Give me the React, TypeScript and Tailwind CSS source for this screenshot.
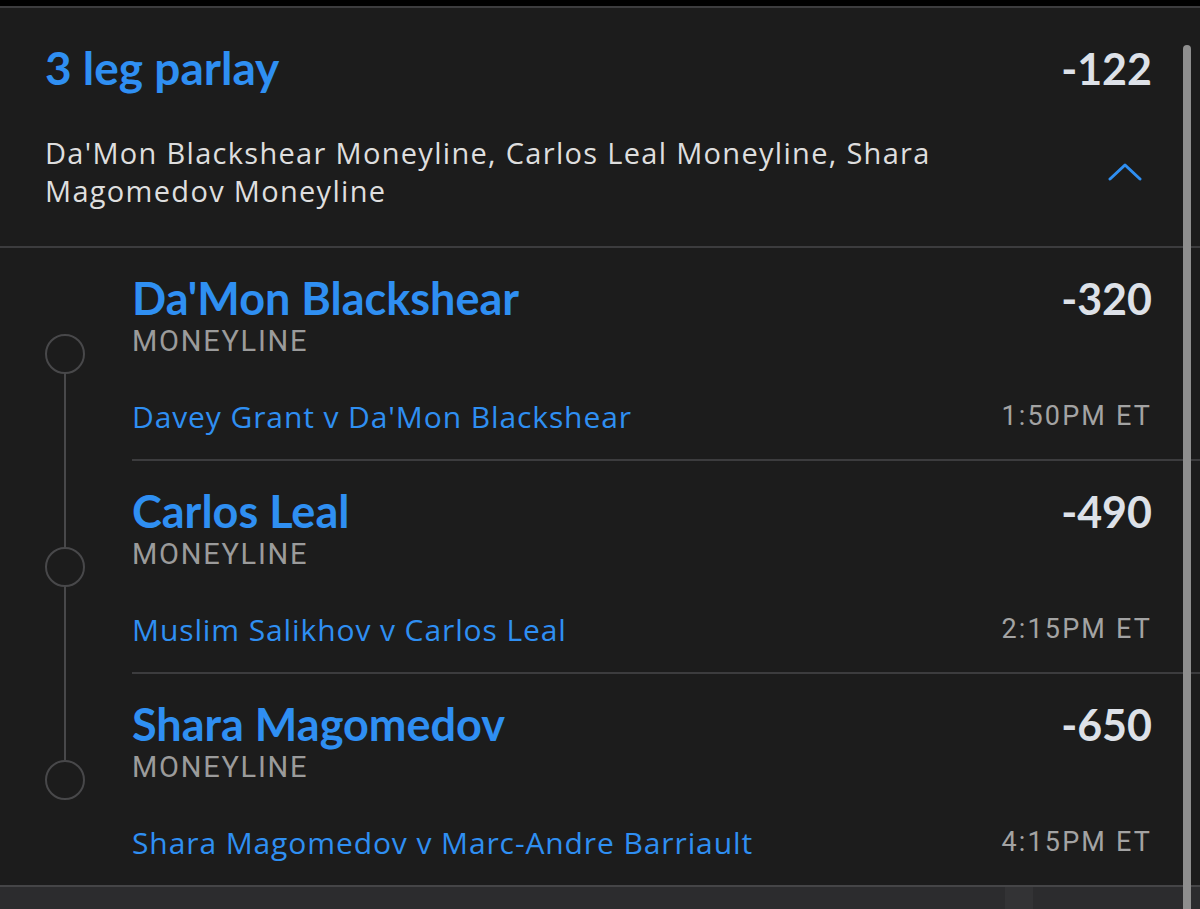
import React from 'react';

type Leg = {
  name: string;
  odds: string;
  matchup: string;
  time: string;
};

const legs: Leg[] = [
  { name: "Da'Mon Blackshear", odds: '-320', matchup: "Davey Grant v Da'Mon Blackshear", time: '1:50PM ET' },
  { name: 'Carlos Leal', odds: '-490', matchup: 'Muslim Salikhov v Carlos Leal', time: '2:15PM ET' },
  { name: 'Shara Magomedov', odds: '-650', matchup: 'Shara Magomedov v Marc-Andre Barriault', time: '4:15PM ET' },
];

const bold = "font-['Lato','Noto_Sans',sans-serif] font-bold";
const body = "font-['Open_Sans','Noto_Sans',sans-serif]";
const narrow = "font-['Roboto','Liberation_Sans',sans-serif]";

const LegRow: React.FC<{ leg: Leg; index: number; total: number }> = ({ leg, index, total }) => {
  const isFirst = index === 0;
  const isLast = index === total - 1;

  return (
    <div className="flex">
      {/* timeline */}
      <div className="w-[132px] shrink-0 flex">
        <div className="ml-[45px] w-[40px] flex flex-col items-center">
          <div className={`h-[86px] w-[2px] ${isFirst ? '' : 'bg-[#48484a]'}`} />
          <div className="h-[40px] w-[40px] rounded-full border-2 border-[#48484a] shrink-0" />
          <div className={`flex-1 w-[2px] ${isLast ? '' : 'bg-[#48484a]'}`} />
        </div>
      </div>

      <div className={`flex-1 pr-[48px] pt-[28px] pb-[25px] ${isLast ? '' : 'border-b-2 border-[#3c3c3e]'}`}>
        <div className="flex items-center justify-between h-[44px]">
          <span className={`${bold} text-[45px] text-[#2f8ff2] leading-none`}>{leg.name}</span>
          <span className={`${bold} text-[43px] text-[#dde1e8] leading-none`}>{leg.odds}</span>
        </div>
        <div className={`${narrow} mt-[6px] h-[32px] flex items-center text-[29px] tracking-[0.06em] text-[#9b9b9b]`}>
          MONEYLINE
        </div>
        <div className="mt-[40px] h-[36px] flex items-center justify-between">
          <span className={`${body} text-[30px] tracking-[0.03em] text-[#2f8ff2]`}>{leg.matchup}</span>
          <span className={`${narrow} text-[27px] tracking-[0.08em] text-[#a3a3a3]`}>{leg.time}</span>
        </div>
      </div>
    </div>
  );
};

export default function App() {
  return (
    <div className="relative w-[1200px] h-[909px] overflow-hidden bg-[#1c1c1c] flex flex-col">
      <div className="h-[6px] bg-black border-b-2 border-[#3c3c3e] box-content" />

      {/* parlay header */}
      <div className="px-[45px] pr-[48px] pt-[36px] pb-[36px] border-b-2 border-[#3c3c3e]">
        <div className="flex items-center justify-between h-[48px]">
          <span className={`${bold} text-[46px] text-[#2f8ff2] leading-none`}>3 leg parlay</span>
          <span className={`${bold} text-[43px] text-[#dde1e8] leading-none`}>-122</span>
        </div>
        <div className="mt-[42px] flex items-center justify-between">
          <p className={`${body} max-w-[920px] text-[29px] leading-[38px] tracking-[0.045em] text-[#dedede]`}>
            Da'Mon Blackshear Moneyline, Carlos Leal Moneyline, Shara Magomedov Moneyline
          </p>
          <svg width="34" height="20" viewBox="0 0 34 20" className="mr-[10px]" fill="none">
            <polyline points="2,17 17,3 32,17" stroke="#2f8ff2" strokeWidth="3" strokeLinecap="round" strokeLinejoin="round" />
          </svg>
        </div>
      </div>

      {/* legs */}
      <div className="flex flex-col">
        {legs.map((leg, i) => (
          <LegRow key={leg.name} leg={leg} index={i} total={legs.length} />
        ))}
      </div>

      {/* bottom bar */}
      <div className="flex-1 border-t-2 border-[#454547] bg-[#2c2c2e] flex">
        <div className="ml-[1005px] w-[28px] bg-[#333335]" />
      </div>

      {/* scrollbar */}
      <div className="absolute right-[9px] top-[45px] w-[8px] h-[900px] rounded-full bg-[#8e8e8e]" />
    </div>
  );
}
